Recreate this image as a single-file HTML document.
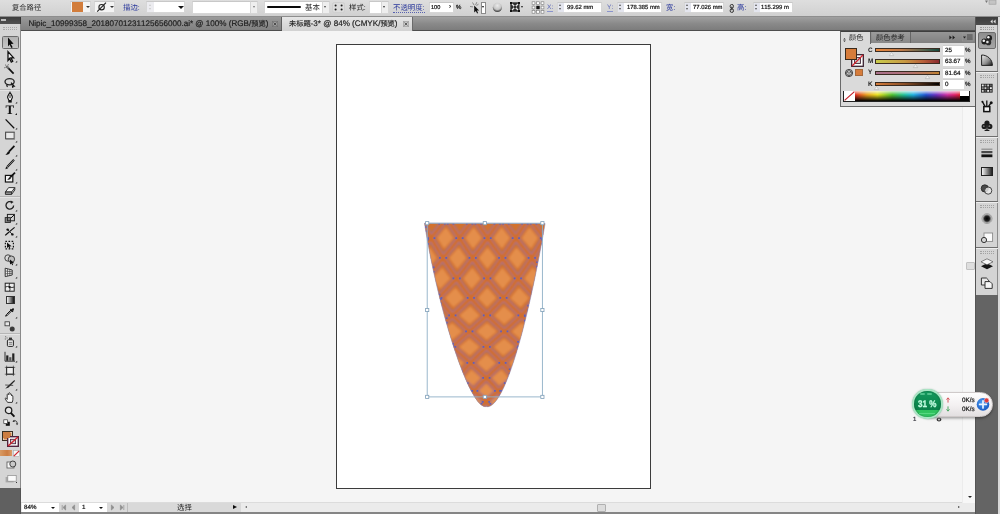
<!DOCTYPE html>
<html lang="zh-CN">
<head>
<meta charset="utf-8">
<title>Adobe Illustrator</title>
<style>
*{box-sizing:border-box;margin:0;padding:0}
html,body{width:1000px;height:514px;overflow:hidden;background:#f5f5f5;font-family:"Liberation Sans","Noto Sans CJK SC",sans-serif;text-rendering:geometricPrecision;font-kerning:none}
body{position:relative}
.a{position:absolute}
svg{display:block;overflow:visible}
.cj{font-family:"Liberation Sans","Noto Sans CJK SC",sans-serif;white-space:nowrap}
.t{position:absolute;white-space:nowrap;font-size:7px;line-height:8px;color:#222}
#ctl{left:0;top:0;width:1000px;height:17px;background:linear-gradient(#dedede,#d6d6d6 60%,#d0d0d0);border-bottom:1px solid #8e8e8e}
.in{position:absolute;background:#fff;border:1px solid #d6d6d6;border-top-color:#c8c8c8}
.v{position:absolute;white-space:nowrap;font-size:5.9px;line-height:6px;color:#161616;-webkit-text-stroke:.22px #161616}
#tabs{left:21px;top:17px;width:954px;height:14px;background:linear-gradient(#a0a0a0,#8a8a8a 50%,#7c7c7c);border-bottom:1px solid #4e4e4e}
.v,.tab,.t,.b{will-change:transform}
.tab{position:absolute;top:0;height:13px;-webkit-text-stroke:.18px #1e1e1e;font-size:8.1px;line-height:13px;white-space:nowrap;color:#1e1e1e}
#canvas{left:21px;top:31px;width:954px;height:472px;background:#f5f5f5}
#art{left:336px;top:44px;width:315px;height:445px;background:#fff;border:1px solid #3c3c3c}
#tools{left:0;top:17px;width:21px;height:471px;background:#d5d5d5;border-right:1px solid #8a8a8a}
#toolsb{left:0;top:488px;width:21px;height:26px;background:#606060;border-right:1.5px solid #525252}
#dock{left:975px;top:17px;width:23px;height:278px;background:#d4d4d4;border-left:1px solid #555;border-right:1px solid #8c8c8c}
#dockb{left:975px;top:295px;width:23px;height:219px;background:#646464;border-left:1px solid #555}
#redge{left:998px;top:17px;width:2px;height:497px;background:#d8d8d8}
#status{left:21px;top:502px;width:954px;height:10px;background:#ebebeb;border-top:1px solid #dcdcdc}
#bline{left:0;top:512px;width:1000px;height:2px;background:#858585}
</style>
</head>
<body>
<div class="a" id="canvas"></div>
<div class="a" id="art"></div>
<div class="a" id="ctl">
<div class="t" style="left:12.3px;top:4.4px"><span class="cj" style="font-size:7.3px;color:#2a2a2a">复合路径</span></div>
<div class="in" style="left:70px;top:1px;width:21px;height:12px;background:#f4f4f4"></div><div class="a" style="left:72px;top:2px;width:11px;height:10px;background:#d27d3c"></div><div class="a tri" style="left:86px;top:6px;border:2px solid transparent;border-top:2.4px solid #333;border-bottom:0"></div><div class="in" style="left:94px;top:1px;width:21px;height:12px;background:#f4f4f4"></div><svg class="a" style="left:96px;top:1px" width="12" height="12" viewBox="0 0 12 12"><circle cx="5.6" cy="6.2" r="2.700" fill="none" stroke="#222" stroke-width="1.100"/><path d="M1.2 10.6 L10 1.6" stroke="#222" stroke-width="1.100"/></svg><div class="a" style="left:110px;top:6px;border:2px solid transparent;border-top:2.4px solid #333;border-bottom:0"></div><div class="t" style="left:122.5px;top:4.1px"><span class="cj" style="font-size:7.4px;color:#2b399c">描边</span><span style="font-size:7px;color:#2b399c">:</span></div>
<div class="in" style="left:146px;top:1px;width:39px;height:12px"></div><div class="a" style="left:146.5px;top:2px;width:7px;height:10px;background:#ececf0"></div><div class="a" style="left:148.5px;top:3.6px;border:1.6px solid transparent;border-bottom:2px solid #c9c9c9;border-top:0"></div><div class="a" style="left:148.5px;top:8.2px;border:1.6px solid transparent;border-top:2px solid #c9c9c9;border-bottom:0"></div><div class="a" style="left:177.5px;top:6.4px;border:3px solid transparent;border-top:3.4px solid #111;border-bottom:0"></div><div class="in" style="left:192px;top:1px;width:59px;height:13px"></div><div class="in" style="left:251px;top:1px;width:7px;height:13px;background:#eee;border-left:0"></div><div class="a" style="left:252.6px;top:6.3px;border:1.7px solid transparent;border-top:2px solid #777;border-bottom:0"></div><div class="in" style="left:264px;top:1px;width:59px;height:13px"></div><div class="a" style="left:267px;top:6.2px;width:34px;height:1.7px;background:#0a0a0a;border-radius:1px"></div><div class="t" style="left:305px;top:4.3px"><span class="cj" style="font-size:7.4px;color:#222">基本</span></div><div class="in" style="left:323px;top:1px;width:7px;height:13px;background:#eee;border-left:0"></div><div class="a" style="left:324.4px;top:6px;border:1.8px solid transparent;border-top:2.2px solid #444;border-bottom:0"></div><svg class="a" style="left:332px;top:2px" width="13" height="11" viewBox="0 0 13 11"><rect x=".5" y=".5" width="12" height="10" rx="2" fill="#dcdcdc" stroke="#cfcfcf"/><g fill="#1c1c1c"><circle cx="3.6" cy="3.4" r="1"/><circle cx="9.6" cy="3.4" r="1"/><circle cx="3.6" cy="7.6" r="1"/><circle cx="9.6" cy="7.6" r="1"/></g></svg><div class="t" style="left:349.3px;top:4.4px"><span class="cj" style="font-size:7.4px;color:#222">样式</span><span style="font-size:7px">:</span></div><div class="in" style="left:368.5px;top:1px;width:13px;height:13px"></div><div class="in" style="left:381.5px;top:1px;width:7px;height:13px;background:#eee;border-left:0"></div><div class="a" style="left:383.3px;top:6px;border:1.8px solid transparent;border-top:2.2px solid #333;border-bottom:0"></div><div class="t" style="left:393px;top:4.3px;height:8.6px;border-bottom:1px dotted #5862b0"><span class="cj" style="font-size:7.4px;color:#2b399c">不透明度</span><span style="font-size:7px;color:#2b399c">:</span></div><div class="in" style="left:428.5px;top:1.5px;width:25px;height:11.5px"></div><div class="v" style="left:431.2px;top:4.8px;font-size:5.6px">100</div><div class="v" style="left:448.6px;top:4.2px;font-size:6.5px">&#8250;</div><div class="v" style="left:456px;top:4.8px;font-size:6px">%</div><svg class="a" style="left:468px;top:1px" width="13" height="13" viewBox="0 0 13 13"><path d="M6.2 4.6l0 7 1.7-1.6 1.2 2.4 1-.5-1.2-2.3 2.2-.2z" fill="#111"/><path d="M4.5 1.5l1.6 2.6M8.8 1.2L7.6 4M2 5.5l3 .4M10.5 3.2L8.4 4.6" stroke="#666" stroke-width=".7"/></svg><div class="in" style="left:480.5px;top:1.5px;width:5.5px;height:12px;border-color:#8a8a8a"></div><div class="a" style="left:481.8px;top:6px;border:1.5px solid transparent;border-top:2px solid #111;border-bottom:0"></div><svg class="a" style="left:492px;top:2px" width="11" height="11" viewBox="0 0 11 11"><defs><radialGradient id="gl" cx=".5" cy=".3" r=".72"><stop offset="0" stop-color="#eaeaea"/><stop offset=".6" stop-color="#c4c4c4"/><stop offset=".82" stop-color="#6a6a6a"/><stop offset="1" stop-color="#2a2a2a"/></radialGradient></defs><circle cx="5.4" cy="5.4" r="4.6" fill="url(#gl)"/></svg><svg class="a" style="left:510px;top:2px" width="10" height="10" viewBox="0 0 10 10"><rect x=".3" y=".3" width="9.2" height="9.4" fill="#2e2e2e"/><path d="M2 2l6 6M8 2L2 8" stroke="#e8e8e8" stroke-width="1.3"/><rect x="4" y="4" width="2" height="2" fill="#2e2e2e"/><g fill="#111"><rect x="0" y="0" width="2" height="2"/><rect x="8" y="0" width="2" height="2"/><rect x="0" y="8" width="2" height="2"/><rect x="8" y="8" width="2" height="2"/></g></svg><div class="a" style="left:520.6px;top:6px;border:1.7px solid transparent;border-top:2.2px solid #222;border-bottom:0"></div><svg class="a" style="left:532px;top:2px" width="12" height="11" viewBox="0 0 12 11"><rect x="1.5" y="1.2" width="9" height="8.6" fill="none" stroke="#9a9a9a" stroke-width=".8" stroke-dasharray="1 1"/><rect x="0.1" y="-0.2" width="2.8" height="2.8" fill="#fff" stroke="#777" stroke-width=".6"/><rect x="4.6" y="-0.2" width="2.8" height="2.8" fill="#fff" stroke="#777" stroke-width=".6"/><rect x="9.1" y="-0.2" width="2.8" height="2.8" fill="#fff" stroke="#777" stroke-width=".6"/><rect x="0.1" y="4.1" width="2.8" height="2.8" fill="#fff" stroke="#777" stroke-width=".6"/><rect x="4.3" y="3.8" width="3.4" height="3.4" fill="#111"/><rect x="9.1" y="4.1" width="2.8" height="2.8" fill="#fff" stroke="#777" stroke-width=".6"/><rect x="0.1" y="8.4" width="2.8" height="2.8" fill="#fff" stroke="#777" stroke-width=".6"/><rect x="4.6" y="8.4" width="2.8" height="2.8" fill="#fff" stroke="#777" stroke-width=".6"/><rect x="9.1" y="8.4" width="2.8" height="2.8" fill="#fff" stroke="#777" stroke-width=".6"/></svg><div class="t" style="left:547px;top:3.6px"><span style="font-size:6.6px;color:#5c68b8;border-bottom:.8px solid #8a94cc;line-height:7px;display:inline-block">X:</span></div><div class="in" style="left:557px;top:1.5px;width:45px;height:11.5px"></div><div class="a" style="left:557.5px;top:2.5px;width:6.5px;height:9.5px;background:#e3e5ee"></div><div class="a" style="left:559.2px;top:3.6px;border:1.6px solid transparent;border-bottom:2px solid #555;border-top:0"></div><div class="a" style="left:559.2px;top:8px;border:1.6px solid transparent;border-top:2px solid #555;border-bottom:0"></div><div class="v" style="left:567px;top:4.8px">99.62 mm</div>
<div class="t" style="left:607.3px;top:3.6px"><span style="font-size:6.6px;color:#5c68b8;border-bottom:.8px solid #8a94cc;line-height:7px;display:inline-block">Y:</span></div><div class="in" style="left:617px;top:1.5px;width:45px;height:11.5px"></div><div class="a" style="left:617.5px;top:2.5px;width:6.5px;height:9.5px;background:#e3e5ee"></div><div class="a" style="left:619.2px;top:3.6px;border:1.6px solid transparent;border-bottom:2px solid #555;border-top:0"></div><div class="a" style="left:619.2px;top:8px;border:1.6px solid transparent;border-top:2px solid #555;border-bottom:0"></div><div class="v" style="left:627px;top:4.8px">178.385 mm</div>
<div class="t" style="left:666px;top:4.2px"><span class="cj" style="font-size:7.4px;color:#2b399c">宽</span><span style="font-size:7px;color:#2b399c">:</span></div><div class="in" style="left:684px;top:1.5px;width:39.5px;height:11.5px"></div><div class="a" style="left:684.5px;top:2.5px;width:6.5px;height:9.5px;background:#e3e5ee"></div><div class="a" style="left:686.2px;top:3.6px;border:1.6px solid transparent;border-bottom:2px solid #555;border-top:0"></div><div class="a" style="left:686.2px;top:8px;border:1.6px solid transparent;border-top:2px solid #555;border-bottom:0"></div><div class="v" style="left:693px;top:4.8px">77.026 mm</div>
<svg class="a" style="left:728.5px;top:3.5px" width="6" height="9" viewBox="0 0 6 9"><rect x="1.2" y=".5" width="3.2" height="3.6" rx="1.4" fill="none" stroke="#333" stroke-width="1"/><rect x="1.2" y="4.8" width="3.2" height="3.6" rx="1.4" fill="none" stroke="#333" stroke-width="1"/><path d="M2.8 2.6v3.6" stroke="#333" stroke-width="1"/></svg><div class="t" style="left:736.6px;top:4.2px"><span class="cj" style="font-size:7.4px;color:#2b399c">高</span><span style="font-size:7px;color:#2b399c">:</span></div><div class="in" style="left:753px;top:1.5px;width:39.5px;height:11.5px"></div><div class="a" style="left:753.5px;top:2.5px;width:6.5px;height:9.5px;background:#e3e5ee"></div><div class="a" style="left:755.2px;top:3.6px;border:1.6px solid transparent;border-bottom:2px solid #555;border-top:0"></div><div class="a" style="left:755.2px;top:8px;border:1.6px solid transparent;border-top:2px solid #555;border-bottom:0"></div><div class="v" style="left:761.3px;top:4.8px">115.299 m</div>
<svg class="a" style="left:984px;top:0" width="14" height="6" viewBox="0 0 14 6"><rect x="5" y="0" width="7" height="4.2" fill="#c4c4c4" stroke="#9a9a9a" stroke-width=".6"/><path d="M1 .5h3l-1.5 2.4z" fill="#777"/></svg></div>
<div class="a" id="tabs">
<div class="tab" style="left:0;width:261px;background:linear-gradient(#9a9a9a,#8c8c8c 50%,#808080);border-right:1px solid #5e5e5e;padding-left:7.4px">Nipic_10999358_20180701231125656000.ai* @ 100% (RGB/<span class="cj" style="font-size:7.2px">预览</span>)</div><svg class="a" style="left:250.5px;top:3.5px" width="6" height="6" viewBox="0 0 6 6"><rect x=".3" y=".3" width="5.4" height="5.4" fill="#9c9c9c" stroke="#6f6f6f" stroke-width=".6"/><path d="M1.6 1.6l2.8 2.8M4.4 1.6L1.6 4.4" stroke="#3a3a3a" stroke-width=".8"/></svg><div class="tab" style="left:261px;width:131px;height:14px;background:linear-gradient(#e6e6e6,#dadada 50%,#d2d2d2);border-right:1px solid #6a6a6a;padding-left:7px"><span class="cj" style="font-size:7.2px">未标题</span>-3* @ 84% (CMYK/<span class="cj" style="font-size:7.2px">预览</span>)</div><svg class="a" style="left:382px;top:3.5px" width="6" height="6" viewBox="0 0 6 6"><rect x=".3" y=".3" width="5.4" height="5.4" fill="#c8c8c8" stroke="#9a9a9a" stroke-width=".6"/><path d="M1.6 1.6l2.8 2.8M4.4 1.6L1.6 4.4" stroke="#444" stroke-width=".8"/></svg></div>
<div class="a" id="status"></div>
<div class="a" style="left:22px;top:503px;width:37px;height:9px;background:#fff"></div><div class="v" style="left:24px;top:505px;font-size:6.2px">84%</div><div class="a" style="left:51px;top:507px;border:2.3px solid transparent;border-top:2.6px solid #111;border-bottom:0"></div><div class="a" style="left:59px;top:503px;width:182px;height:9px;background:#d9d9d9"></div><svg class="a" style="left:61px;top:504px" width="16" height="7" viewBox="0 0 16 7"><path d="M1.2 1v5M4.6 1v5l-2.6-2.5zM13.6 1v5l-2.6-2.5z" fill="#8e8e8e" stroke="#8e8e8e" stroke-width=".7"/></svg><div class="a" style="left:79px;top:503px;width:28px;height:9px;background:#fff"></div><div class="v" style="left:82px;top:505px;font-size:6.2px">1</div><div class="a" style="left:99.4px;top:507px;border:2.3px solid transparent;border-top:2.6px solid #111;border-bottom:0"></div><svg class="a" style="left:109px;top:504px" width="16" height="7" viewBox="0 0 16 7"><path d="M2.4 1v5l2.6-2.5zM11.4 1v5l2.6-2.5zM14.8 1v5" fill="#8e8e8e" stroke="#8e8e8e" stroke-width=".7"/></svg><div class="a" style="left:127px;top:503px;width:1px;height:9px;background:#bdbdbd"></div><div class="t" style="left:177.4px;top:503.6px"><span class="cj" style="font-size:7.4px;color:#1a1a1a">选择</span></div><div class="a" style="left:233.4px;top:505px;border:2.8px solid transparent;border-left:4.4px solid #0c0c0c;border-right:0"></div><div class="a" style="left:245px;top:506px;border:1.6px solid transparent;border-right:2px solid #555;border-left:0"></div><div class="a" style="left:597px;top:504px;width:9px;height:8px;background:#dcdcdc;border:1px solid #b0b0b0;border-radius:1px"></div><div class="a" style="left:958px;top:506px;border:1.6px solid transparent;border-left:2px solid #444;border-right:0"></div><div class="a" id="bline"></div>
<div class="a" id="tools"></div><div class="a" id="toolsb"></div>
<div class="a" id="dock"></div><div class="a" id="dockb"></div><div class="a" id="redge"></div>
<svg class="a" style="left:0;top:0" width="1000" height="514" viewBox="0 0 1000 514"><title>cone artwork</title><defs><clipPath id="cc"><path d="M424.5 223.2L545.1 223.5C526.2 333.7 502.9 410.2 486.4 406.6C469.9 410.2 437.9 309.7 424.5 223.2Z"/></clipPath><filter id="sb" x="-5%" y="-5%" width="110%" height="110%"><feGaussianBlur stdDeviation=".95"/></filter></defs><path d="M424.5 223.2L545.1 223.5C526.2 333.7 502.9 410.2 486.4 406.6C469.9 410.2 437.9 309.7 424.5 223.2Z" fill="#d2722f"/><g clip-path="url(#cc)"><g filter="url(#sb)"><path d="M418.1 229.2L423.7 238L415.5 246.8L410.5 238ZM445.9 229.2L451.9 238L444.3 246.8L438.7 238ZM473.7 229.2L480.1 238L473.1 246.8L466.9 238ZM501.6 229.2L508.3 238L501.9 246.8L495.1 238ZM529.4 229.2L536.5 238L530.8 246.8L523.3 238ZM429.5 249.2L435.2 258L427.3 267L421.3 258ZM458.5 249.2L464.8 258L457.3 267L450.9 258ZM487.5 249.2L494.4 258L487.4 267L480.5 258ZM516.5 249.2L524 258L517.4 267L510.1 258ZM545.5 249.2L553.6 258L547.4 267L539.7 258ZM442.1 269.5L448.6 278.5L440 287.1L434.2 278.5ZM472.3 269.5L479.2 278.5L471.5 287.1L464.8 278.5ZM502.4 269.5L509.8 278.5L502.9 287.1L495.4 278.5ZM532.6 269.5L540.4 278.5L534.4 287.1L526 278.5ZM423.8 289.4L429.6 298L420.1 305.7L414.3 298ZM455.5 289.4L462.2 298L453.6 305.7L446.9 298ZM487.2 289.4L494.8 298L487 305.7L479.5 298ZM518.9 289.4L527.4 298L520.5 305.7L512.1 298ZM550.6 289.4L560 298L554 305.7L544.7 298ZM436.5 307.8L443.2 315.5L434.7 322.5L426.9 315.5ZM470.2 307.8L477.8 315.5L469.5 322.5L461.5 315.5ZM503.9 307.8L512.4 315.5L504.3 322.5L496.1 315.5ZM537.6 307.8L547 315.5L539.1 322.5L530.7 315.5ZM417.2 324.5L425 331.5L417.1 338.3L408.6 331.5ZM452 324.5L460 331.5L451.9 338.3L443.6 331.5ZM486.9 324.5L495 331.5L486.7 338.3L478.6 331.5ZM521.7 324.5L530 331.5L521.6 338.3L513.6 331.5ZM434.5 340.2L442.9 347L436.4 354L426.6 347ZM469.3 340.2L477.5 347L469.8 354L461.2 347ZM504.1 340.2L512.1 347L503.3 354L495.8 347ZM538.9 340.2L546.7 347L536.8 354L530.4 347ZM420.3 356L430 363L425.9 369.6L415 363ZM453.4 356L462 363L456.2 369.6L447 363ZM486.6 356L494 363L486.4 369.6L479 363ZM519.7 356L526 363L516.6 369.6L511 363ZM552.8 356L558 363L546.9 369.6L543 363ZM412 371.4L422.9 378L420.6 383.7L409.7 378ZM441.8 371.4L450.9 378L446.9 383.7L437.7 378ZM471.5 371.4L478.9 378L473.1 383.7L465.7 378ZM501.3 371.4L506.9 378L499.4 383.7L493.7 378ZM531 371.4L534.9 378L525.6 383.7L521.7 378ZM434.7 385.3L443.8 391L440.7 395.8L432.5 391ZM460.5 385.3L467.8 391L463.4 395.8L456.5 391ZM486.2 385.3L491.8 391L486.1 395.8L480.5 391ZM512 385.3L515.8 391L508.8 395.8L504.5 391ZM537.8 385.3L539.8 391L531.4 395.8L528.5 391ZM430.3 397.2L438.4 402L435.6 406L428.6 402ZM452.6 397.2L459.4 402L455.7 406L449.6 402ZM474.9 397.2L480.4 402L475.9 406L470.6 402ZM497.2 397.2L501.4 402L496 406L491.6 402ZM519.6 397.2L522.4 402L516.1 406L512.6 402ZM541.9 397.2L543.4 402L536.2 406L533.6 402ZM426.3 407L433.3 411L430.1 414.5L424.4 411ZM446.2 407L452.3 411L448.6 414.5L443.4 411ZM466 407L471.3 411L467.2 414.5L462.4 411ZM485.9 407L490.3 411L485.8 414.5L481.4 411ZM505.8 407L509.3 411L504.3 414.5L500.4 411ZM525.7 407L528.3 411L522.9 414.5L519.4 411ZM545.6 407L547.3 411L541.4 414.5L538.4 411Z" fill="#e48e4c" stroke="#e48e4c" stroke-width="2.400" stroke-linejoin="round"/><path d="M406.5 363L418.9 370.5L430.3 378L440.7 384.5L450.2 391L458 396.5L465 402L470.9 406.5L476.3 411M399.3 331.5L408.4 339.2L417.4 347L428.3 355L438.5 363L448.9 370.5L458.3 378L466.7 384.5L474.2 391L480.5 396.5L486 402L490.9 406.5L495.3 411M395.5 278.5L400.3 288.2L405.6 298L411.4 306.8L417.8 315.5L426 323.5L434.3 331.5L443.2 339.2L452 347L461.6 355L470.5 363L478.9 370.5L486.3 378L492.7 384.5L498.2 391L503 396.5L507 402L510.9 406.5L514.3 411M397.3 228L403 238L408 248L413.4 258L419.6 268.2L426.1 278.5L431.9 288.2L438.2 298L445 306.8L452.4 315.5L460.8 323.5L469.3 331.5L478 339.2L486.6 347L494.9 355L502.5 363L508.9 370.5L514.3 378L518.7 384.5L522.2 391L525.5 396.5L528 402L530.9 406.5L533.3 411M427.3 208L419.3 218L411.2 228L403 238M413.9 208L419.3 218L425.1 228L431.2 238L436.9 248L443 258L449.7 268.2L456.7 278.5L463.5 288.2L470.8 298L478.6 306.8L487 315.5L495.6 323.5L504.3 331.5L512.8 339.2L521.2 347L528.2 355L534.5 363L538.9 370.5L542.3 378L544.7 384.5L546.2 391L548 396.5L549 402L550.9 406.5L552.3 411M454.2 208L446.7 218L439 228L431.2 238L422.5 248L413.4 258L404.6 268.2L395.5 278.5M440.8 208L446.7 218L452.9 228L459.4 238L465.8 248L472.6 258L479.8 268.2L487.3 278.5L495.1 288.2L503.4 298L512.2 306.8L521.6 315.5L530.4 323.5L539.3 331.5L547.6 339.2L555.8 347L561.5 355L566.5 363L568.9 370.5L570.3 378L570.7 384.5L570.2 391L570.5 396.5L570 402L570.9 406.5L571.3 411M481.1 208L474.1 218L466.8 228L459.4 238L451.4 248L443 258L434.7 268.2L426.1 278.5L416.1 288.2L405.6 298M467.7 208L474.1 218L480.7 228L487.6 238L494.7 248L502.2 258L509.9 268.2L517.9 278.5L526.7 288.2L536 298L545.8 306.8L556.2 315.5L565.2 323.5L574.3 331.5M508 208L501.5 218L494.6 228L487.6 238L480.3 248L472.6 258L464.8 268.2L456.7 278.5L447.7 288.2L438.2 298L428.2 306.8L417.8 315.5L408.6 323.5L399.3 331.5M494.6 208L501.5 218L508.5 228L515.8 238L523.6 248L531.8 258L540 268.2L548.5 278.5L558.3 288.2L568.6 298M534.9 208L528.9 218L522.4 228L515.8 238L509.2 248L502.2 258L494.9 268.2L487.3 278.5L479.3 288.2L470.8 298L461.8 306.8L452.4 315.5L443.4 323.5L434.3 331.5L425.8 339.2L417.4 347L411.6 355L406.5 363L403.9 370.5L402.3 378L401.7 384.5L402.2 391L401.7 396.5L402 402L400.9 406.5L400.3 411M521.5 208L528.9 218L536.3 228L544 238L552.5 248L561.4 258L570.1 268.2M561.8 208L556.3 218L550.2 228L544 238L538.1 248L531.8 258L525 268.2L517.9 278.5L510.9 288.2L503.4 298L495.4 306.8L487 315.5L478.2 323.5L469.3 331.5L460.6 339.2L452 347L444.9 355L438.5 363L433.9 370.5L430.3 378L427.7 384.5L426.2 391L424.2 396.5L423 402L420.9 406.5L419.3 411M548.4 208L556.3 218L564.1 228L572.2 238M572.2 238L567 248L561.4 258L555.1 268.2L548.5 278.5L542.5 288.2L536 298L529 306.8L521.6 315.5L513 323.5L504.3 331.5L495.4 339.2L486.6 347L478.2 355L470.5 363L463.9 370.5L458.3 378L453.7 384.5L450.2 391L446.7 396.5L444 402L440.9 406.5L438.3 411M574.1 288.2L568.6 298L562.6 306.8L556.2 315.5L547.8 323.5L539.3 331.5L530.2 339.2L521.2 347L511.5 355L502.5 363L493.9 370.5L486.3 378L479.7 384.5L474.2 391L469.2 396.5L465 402L460.9 406.5L457.3 411M574.3 331.5L565 339.2L555.8 347L544.8 355L534.5 363L523.9 370.5L514.3 378L505.7 384.5L498.2 391L491.7 396.5L486 402L480.9 406.5L476.3 411M566.5 363L553.9 370.5L542.3 378L531.7 384.5L522.2 391L514.2 396.5L507 402L500.9 406.5L495.3 411" fill="none" stroke="#6672cc" stroke-opacity=".62" stroke-width="6.2" stroke-linejoin="round"/><path d="M406.5 363L418.9 370.5L430.3 378L440.7 384.5L450.2 391L458 396.5L465 402L470.9 406.5L476.3 411M399.3 331.5L408.4 339.2L417.4 347L428.3 355L438.5 363L448.9 370.5L458.3 378L466.7 384.5L474.2 391L480.5 396.5L486 402L490.9 406.5L495.3 411M395.5 278.5L400.3 288.2L405.6 298L411.4 306.8L417.8 315.5L426 323.5L434.3 331.5L443.2 339.2L452 347L461.6 355L470.5 363L478.9 370.5L486.3 378L492.7 384.5L498.2 391L503 396.5L507 402L510.9 406.5L514.3 411M397.3 228L403 238L408 248L413.4 258L419.6 268.2L426.1 278.5L431.9 288.2L438.2 298L445 306.8L452.4 315.5L460.8 323.5L469.3 331.5L478 339.2L486.6 347L494.9 355L502.5 363L508.9 370.5L514.3 378L518.7 384.5L522.2 391L525.5 396.5L528 402L530.9 406.5L533.3 411M427.3 208L419.3 218L411.2 228L403 238M413.9 208L419.3 218L425.1 228L431.2 238L436.9 248L443 258L449.7 268.2L456.7 278.5L463.5 288.2L470.8 298L478.6 306.8L487 315.5L495.6 323.5L504.3 331.5L512.8 339.2L521.2 347L528.2 355L534.5 363L538.9 370.5L542.3 378L544.7 384.5L546.2 391L548 396.5L549 402L550.9 406.5L552.3 411M454.2 208L446.7 218L439 228L431.2 238L422.5 248L413.4 258L404.6 268.2L395.5 278.5M440.8 208L446.7 218L452.9 228L459.4 238L465.8 248L472.6 258L479.8 268.2L487.3 278.5L495.1 288.2L503.4 298L512.2 306.8L521.6 315.5L530.4 323.5L539.3 331.5L547.6 339.2L555.8 347L561.5 355L566.5 363L568.9 370.5L570.3 378L570.7 384.5L570.2 391L570.5 396.5L570 402L570.9 406.5L571.3 411M481.1 208L474.1 218L466.8 228L459.4 238L451.4 248L443 258L434.7 268.2L426.1 278.5L416.1 288.2L405.6 298M467.7 208L474.1 218L480.7 228L487.6 238L494.7 248L502.2 258L509.9 268.2L517.9 278.5L526.7 288.2L536 298L545.8 306.8L556.2 315.5L565.2 323.5L574.3 331.5M508 208L501.5 218L494.6 228L487.6 238L480.3 248L472.6 258L464.8 268.2L456.7 278.5L447.7 288.2L438.2 298L428.2 306.8L417.8 315.5L408.6 323.5L399.3 331.5M494.6 208L501.5 218L508.5 228L515.8 238L523.6 248L531.8 258L540 268.2L548.5 278.5L558.3 288.2L568.6 298M534.9 208L528.9 218L522.4 228L515.8 238L509.2 248L502.2 258L494.9 268.2L487.3 278.5L479.3 288.2L470.8 298L461.8 306.8L452.4 315.5L443.4 323.5L434.3 331.5L425.8 339.2L417.4 347L411.6 355L406.5 363L403.9 370.5L402.3 378L401.7 384.5L402.2 391L401.7 396.5L402 402L400.9 406.5L400.3 411M521.5 208L528.9 218L536.3 228L544 238L552.5 248L561.4 258L570.1 268.2M561.8 208L556.3 218L550.2 228L544 238L538.1 248L531.8 258L525 268.2L517.9 278.5L510.9 288.2L503.4 298L495.4 306.8L487 315.5L478.2 323.5L469.3 331.5L460.6 339.2L452 347L444.9 355L438.5 363L433.9 370.5L430.3 378L427.7 384.5L426.2 391L424.2 396.5L423 402L420.9 406.5L419.3 411M548.4 208L556.3 218L564.1 228L572.2 238M572.2 238L567 248L561.4 258L555.1 268.2L548.5 278.5L542.5 288.2L536 298L529 306.8L521.6 315.5L513 323.5L504.3 331.5L495.4 339.2L486.6 347L478.2 355L470.5 363L463.9 370.5L458.3 378L453.7 384.5L450.2 391L446.7 396.5L444 402L440.9 406.5L438.3 411M574.1 288.2L568.6 298L562.6 306.8L556.2 315.5L547.8 323.5L539.3 331.5L530.2 339.2L521.2 347L511.5 355L502.5 363L493.9 370.5L486.3 378L479.7 384.5L474.2 391L469.2 396.5L465 402L460.9 406.5L457.3 411M574.3 331.5L565 339.2L555.8 347L544.8 355L534.5 363L523.9 370.5L514.3 378L505.7 384.5L498.2 391L491.7 396.5L486 402L480.9 406.5L476.3 411M566.5 363L553.9 370.5L542.3 378L531.7 384.5L522.2 391L514.2 396.5L507 402L500.9 406.5L495.3 411" fill="none" stroke="#d06e2e" stroke-width="4.2" stroke-linejoin="round"/></g><path d="M427.2 237.2h1.7v1.7h-1.7zM433.6 237.2h1.7v1.7h-1.7zM455.4 237.2h1.7v1.7h-1.7zM461.8 237.2h1.7v1.7h-1.7zM483.6 237.2h1.7v1.7h-1.7zM489.9 237.2h1.7v1.7h-1.7zM511.8 237.2h1.7v1.7h-1.7zM518.2 237.2h1.7v1.7h-1.7zM539.9 237.2h1.7v1.7h-1.7zM546.4 237.2h1.7v1.7h-1.7zM439 257.1h1.7v1.7h-1.7zM445.4 257.1h1.7v1.7h-1.7zM468.6 257.1h1.7v1.7h-1.7zM475 257.1h1.7v1.7h-1.7zM498.2 257.1h1.7v1.7h-1.7zM504.6 257.1h1.7v1.7h-1.7zM527.8 257.1h1.7v1.7h-1.7zM534.2 257.1h1.7v1.7h-1.7zM422 277.6h1.7v1.7h-1.7zM428.4 277.6h1.7v1.7h-1.7zM452.6 277.6h1.7v1.7h-1.7zM459 277.6h1.7v1.7h-1.7zM483.2 277.6h1.7v1.7h-1.7zM489.6 277.6h1.7v1.7h-1.7zM513.8 277.6h1.7v1.7h-1.7zM520.2 277.6h1.7v1.7h-1.7zM544.4 277.6h1.7v1.7h-1.7zM550.8 277.6h1.7v1.7h-1.7zM434.2 297.1h1.7v1.7h-1.7zM440.6 297.1h1.7v1.7h-1.7zM466.8 297.1h1.7v1.7h-1.7zM473.2 297.1h1.7v1.7h-1.7zM499.4 297.1h1.7v1.7h-1.7zM505.8 297.1h1.7v1.7h-1.7zM532 297.1h1.7v1.7h-1.7zM538.4 297.1h1.7v1.7h-1.7zM448.3 314.6h1.7v1.7h-1.7zM454.7 314.6h1.7v1.7h-1.7zM482.9 314.6h1.7v1.7h-1.7zM489.3 314.6h1.7v1.7h-1.7zM517.5 314.6h1.7v1.7h-1.7zM523.9 314.6h1.7v1.7h-1.7zM430.2 330.6h1.7v1.7h-1.7zM436.6 330.6h1.7v1.7h-1.7zM465.2 330.6h1.7v1.7h-1.7zM471.6 330.6h1.7v1.7h-1.7zM500.2 330.6h1.7v1.7h-1.7zM506.6 330.6h1.7v1.7h-1.7zM535.2 330.6h1.7v1.7h-1.7zM541.6 330.6h1.7v1.7h-1.7zM448 346.1h1.7v1.7h-1.7zM454.4 346.1h1.7v1.7h-1.7zM482.6 346.1h1.7v1.7h-1.7zM489 346.1h1.7v1.7h-1.7zM517.2 346.1h1.7v1.7h-1.7zM523.6 346.1h1.7v1.7h-1.7zM434.4 362.1h1.7v1.7h-1.7zM440.8 362.1h1.7v1.7h-1.7zM466.4 362.1h1.7v1.7h-1.7zM472.8 362.1h1.7v1.7h-1.7zM498.4 362.1h1.7v1.7h-1.7zM504.8 362.1h1.7v1.7h-1.7zM530.4 362.1h1.7v1.7h-1.7zM536.8 362.1h1.7v1.7h-1.7zM426.3 377.1h1.7v1.7h-1.7zM432.7 377.1h1.7v1.7h-1.7zM454.3 377.1h1.7v1.7h-1.7zM460.7 377.1h1.7v1.7h-1.7zM482.3 377.1h1.7v1.7h-1.7zM488.7 377.1h1.7v1.7h-1.7zM510.3 377.1h1.7v1.7h-1.7zM516.7 377.1h1.7v1.7h-1.7zM538.3 377.1h1.7v1.7h-1.7zM544.7 377.1h1.7v1.7h-1.7zM422.1 390.1h1.7v1.7h-1.7zM428.5 390.1h1.7v1.7h-1.7zM446.1 390.1h1.7v1.7h-1.7zM452.5 390.1h1.7v1.7h-1.7zM470.1 390.1h1.7v1.7h-1.7zM476.5 390.1h1.7v1.7h-1.7zM494.1 390.1h1.7v1.7h-1.7zM500.5 390.1h1.7v1.7h-1.7zM518.1 390.1h1.7v1.7h-1.7zM524.5 390.1h1.7v1.7h-1.7zM542.1 390.1h1.7v1.7h-1.7zM548.5 390.1h1.7v1.7h-1.7zM418.9 401.1h1.7v1.7h-1.7zM425.3 401.1h1.7v1.7h-1.7zM439.9 401.1h1.7v1.7h-1.7zM446.3 401.1h1.7v1.7h-1.7zM460.9 401.1h1.7v1.7h-1.7zM467.3 401.1h1.7v1.7h-1.7zM481.9 401.1h1.7v1.7h-1.7zM488.3 401.1h1.7v1.7h-1.7zM502.9 401.1h1.7v1.7h-1.7zM509.3 401.1h1.7v1.7h-1.7zM523.9 401.1h1.7v1.7h-1.7zM530.4 401.1h1.7v1.7h-1.7zM544.9 401.1h1.7v1.7h-1.7zM551.4 401.1h1.7v1.7h-1.7zM466.9 382.3h1.7v1.7h-1.7zM466.9 386.7h1.7v1.7h-1.7zM489.5 402.9h1.7v1.7h-1.7zM489.5 407.3h1.7v1.7h-1.7zM452.4 344.9h1.7v1.7h-1.7zM452.4 349.3h1.7v1.7h-1.7zM499.2 390h1.7v1.7h-1.7zM499.2 394.4h1.7v1.7h-1.7zM439.9 298.2h1.7v1.7h-1.7zM439.9 302.6h1.7v1.7h-1.7zM508.8 368.4h1.7v1.7h-1.7zM508.8 372.8h1.7v1.7h-1.7zM425 226.2h1.7v1.7h-1.7zM425 230.6h1.7v1.7h-1.7zM517.2 341h1.7v1.7h-1.7zM517.2 345.4h1.7v1.7h-1.7zM438.3 222.9h1.7v1.7h-1.7zM443.9 222.9h1.7v1.7h-1.7zM427.1 238.7h1.7v1.7h-1.7zM427.1 243.1h1.7v1.7h-1.7zM446.9 222.9h1.7v1.7h-1.7zM452.5 222.9h1.7v1.7h-1.7zM524 315.4h1.7v1.7h-1.7zM524 319.8h1.7v1.7h-1.7zM465.9 222.9h1.7v1.7h-1.7zM471.5 222.9h1.7v1.7h-1.7zM432.8 266.5h1.7v1.7h-1.7zM432.8 270.9h1.7v1.7h-1.7zM474.6 222.9h1.7v1.7h-1.7zM480.2 222.9h1.7v1.7h-1.7zM531.6 291.3h1.7v1.7h-1.7zM531.6 295.7h1.7v1.7h-1.7zM493.6 222.9h1.7v1.7h-1.7zM499.2 222.9h1.7v1.7h-1.7zM438.6 293.7h1.7v1.7h-1.7zM438.6 298.1h1.7v1.7h-1.7zM502.2 222.9h1.7v1.7h-1.7zM507.8 222.9h1.7v1.7h-1.7zM536.1 261.4h1.7v1.7h-1.7zM536.1 265.8h1.7v1.7h-1.7zM521.2 222.9h1.7v1.7h-1.7zM526.8 222.9h1.7v1.7h-1.7zM445.9 317.4h1.7v1.7h-1.7zM445.9 321.8h1.7v1.7h-1.7zM529.9 222.9h1.7v1.7h-1.7zM535.5 222.9h1.7v1.7h-1.7zM542.2 233.7h1.7v1.7h-1.7zM542.2 238.1h1.7v1.7h-1.7zM541 238.7h1.7v1.7h-1.7zM541 243.1h1.7v1.7h-1.7zM452.3 343h1.7v1.7h-1.7zM452.3 347.4h1.7v1.7h-1.7zM527.3 304.8h1.7v1.7h-1.7zM527.3 309.2h1.7v1.7h-1.7zM460.8 370.3h1.7v1.7h-1.7zM460.8 374.7h1.7v1.7h-1.7zM516.7 346.9h1.7v1.7h-1.7zM516.7 351.3h1.7v1.7h-1.7zM471.4 390h1.7v1.7h-1.7zM471.4 394.4h1.7v1.7h-1.7zM503.9 382.3h1.7v1.7h-1.7zM503.9 386.7h1.7v1.7h-1.7zM480.7 402.9h1.7v1.7h-1.7zM480.7 407.3h1.7v1.7h-1.7z" fill="#4a5cd0" fill-opacity=".85"/></g><path d="M424.5 223.2L545.1 223.5C526.2 333.7 502.9 410.2 486.4 406.6C469.9 410.2 437.9 309.7 424.5 223.2Z" fill="none" stroke="#8a86b8" stroke-opacity=".55" stroke-width="1"/><rect x="427.2" y="223.2" width="115.19999999999999" height="173.7" fill="none" stroke="#8fb0c6" stroke-width=".9"/><rect x="425.6" y="221.6" width="3.2" height="3.2" fill="#fff" stroke="#7f9fb8" stroke-width=".8"/><rect x="425.6" y="308.4" width="3.2" height="3.2" fill="#fff" stroke="#7f9fb8" stroke-width=".8"/><rect x="425.6" y="395.3" width="3.2" height="3.2" fill="#fff" stroke="#7f9fb8" stroke-width=".8"/><rect x="483.2" y="221.6" width="3.2" height="3.2" fill="#fff" stroke="#7f9fb8" stroke-width=".8"/><rect x="483.2" y="395.3" width="3.2" height="3.2" fill="#fff" stroke="#7f9fb8" stroke-width=".8"/><rect x="540.8" y="221.6" width="3.2" height="3.2" fill="#fff" stroke="#7f9fb8" stroke-width=".8"/><rect x="540.8" y="308.4" width="3.2" height="3.2" fill="#fff" stroke="#7f9fb8" stroke-width=".8"/><rect x="540.8" y="395.3" width="3.2" height="3.2" fill="#fff" stroke="#7f9fb8" stroke-width=".8"/></svg>
<div class="a" style="left:0;top:17px;width:21px;height:7px;background:linear-gradient(#3e3e3e,#505050);border-right:1px solid #333"></div><div class="a" style="left:1px;top:19px;width:5px;height:2px;background:#bdbdbd"></div><div class="a" style="left:3px;top:27px;width:14px;height:3px;border-top:1px dotted #a8a8a8;border-bottom:1px dotted #a8a8a8"></div><div class="a" style="left:2px;top:35.5px;width:16.5px;height:13.5px;background:linear-gradient(#b2b2b2,#c6c6c6);border:1px solid #6a6a6a;border-radius:1.5px"></div><svg class="a" style="left:4px;top:37px" width="13" height="12" viewBox="0 0 13 12"><path d="M4 .6l5.6 6.2-2.7.1 1.8 3.4-1.4.7-1.7-3.5L4 9.4z" fill="#0c0c0c"/></svg>
<svg class="a" style="left:4px;top:50.5px" width="13" height="12" viewBox="0 0 13 12"><path d="M4 .6l5.6 6.2-2.7.1 1.8 3.4-1.4.7-1.7-3.5L4 9.4z" fill="#f4f4f4" stroke="#111" stroke-width="1.3"/><path d="M11.4 11.6h1.8v-1.8z" fill="#222"/></svg>
<svg class="a" style="left:4px;top:63.5px" width="13" height="12" viewBox="0 0 13 12"><path d="M2.4 2.2l7.2 7.4" stroke="#111" stroke-width="1.7"/><path d="M2.4 2.2l2.2 2.2" stroke="#777" stroke-width="2.2"/><path d="M1 .6l1 .9M4.4 .2l-.4 1.2M.2 3.8l1.3-.3" stroke="#444" stroke-width=".7"/></svg>
<svg class="a" style="left:4px;top:77.5px" width="13" height="12" viewBox="0 0 13 12"><ellipse cx="5.6" cy="3.8" rx="4.6" ry="3.1" fill="none" stroke="#222" stroke-width="1.3"/><path d="M3.4 6.4c-1 .8-.6 2 .3 2.2M7 4.6l3.2 3.6-1.7 0 .4 1.6" fill="none" stroke="#111" stroke-width="1.2"/></svg>
<div class="a" style="left:0;top:88.5px;width:20px;height:1px;background:#b6b6b6;border-bottom:1px solid #e4e4e4;height:2px"></div><svg class="a" style="left:4px;top:91.5px" width="13" height="12" viewBox="0 0 13 12"><path d="M6 .4c.6 1.4 2.4 3 2.4 5L7 8.6H5L3.6 5.4c0-2 1.8-3.600 2.400-5z" fill="#f0f0f0" stroke="#111" stroke-width="1.1"/><path d="M6 3v3" stroke="#111" stroke-width=".9"/><rect x="4.300" y="8.800" width="3.400" height="1.800" fill="#111"/><path d="M11.4 11.6h1.8v-1.8z" fill="#222"/></svg>
<div class="a" style="left:5.6px;top:102.6px;font-family:'Liberation Serif',serif;font-weight:bold;font-size:13px;line-height:13px;color:#111">T</div><svg class="a" style="left:15.2px;top:113px" width="2" height="2" viewBox="0 0 2 2"><path d="M0 2h2V0z" fill="#222"/></svg><svg class="a" style="left:4px;top:117.5px" width="13" height="12" viewBox="0 0 13 12"><path d="M1.6 1.4l8.6 8.800" stroke="#111" stroke-width="1.3"/><path d="M11.4 11.6h1.8v-1.8z" fill="#222"/></svg>
<svg class="a" style="left:4px;top:131px" width="13" height="12" viewBox="0 0 13 12"><rect x="1.6" y="1.2" width="8.600" height="6.600" fill="#e9e9e9" stroke="#4a4a4a" stroke-width="1.1"/><path d="M2 8.4h8.6V2" fill="none" stroke="#8a8a8a" stroke-width=".8"/><path d="M11.4 11.6h1.8v-1.8z" fill="#222"/></svg>
<svg class="a" style="left:4px;top:144.5px" width="13" height="12" viewBox="0 0 13 12"><path d="M10.4 .8L5 6.600" stroke="#111" stroke-width="1.7"/><path d="M4.800 6.200c-1.700.3-1.400 2.400-3.400 3.200 2 .8 4.400-.3 4.600-2.200z" fill="#111"/><path d="M11.4 11.6h1.8v-1.8z" fill="#222"/></svg>
<svg class="a" style="left:4px;top:158.5px" width="13" height="12" viewBox="0 0 13 12"><path d="M10 .8L3.200 8" stroke="#111" stroke-width="2"/><path d="M10 .8L3.200 8" stroke="#d0d0d0" stroke-width=".6"/><path d="M1.400 10.200l.8-2.800 2 1.800z" fill="#111"/><path d="M11.4 11.6h1.8v-1.8z" fill="#222"/></svg>
<svg class="a" style="left:4px;top:171.5px" width="13" height="12" viewBox="0 0 13 12"><rect x="1.4" y="3.400" width="7.400" height="6.600" fill="#f2f2f2" stroke="#111" stroke-width="1.200"/><path d="M11 .6L6.200 5.400" stroke="#111" stroke-width="1.700"/><path d="M6 5c-1.500.3-1.200 2-2.800 2.600 1.700.6 3.600-.2 3.800-1.800z" fill="#111"/><path d="M11.4 11.6h1.8v-1.8z" fill="#222"/></svg>
<svg class="a" style="left:4px;top:185.5px" width="13" height="12" viewBox="0 0 13 12"><path d="M4.600 1.600h6.200L7.600 6H1.400z" fill="#f4f4f4" stroke="#222" stroke-width=".900"/><path d="M1.400 6h6.200v2.400H1.400z" fill="#9a9a9a" stroke="#222" stroke-width=".9"/><path d="M7.600 8.400L10.800 4V1.600" fill="none" stroke="#222" stroke-width=".900"/><path d="M11.4 11.6h1.8v-1.8z" fill="#222"/></svg>
<div class="a" style="left:0;top:196px;width:20px;height:2px;background:#b6b6b6;border-bottom:1px solid #e4e4e4"></div><svg class="a" style="left:4px;top:199.5px" width="13" height="12" viewBox="0 0 13 12"><path d="M9.600 5.400a3.800 3.800 0 1 1-1.600-3.100" fill="none" stroke="#222" stroke-width="1.300"/><path d="M6.600.4l3 1.600-2.600 1.800z" fill="#222"/><path d="M11.4 11.6h1.8v-1.8z" fill="#222"/></svg>
<svg class="a" style="left:4px;top:212.5px" width="13" height="12" viewBox="0 0 13 12"><rect x="1.200" y="4.600" width="5.200" height="4.800" fill="#8c8c8c" stroke="#222" stroke-width=".9"/><rect x="3.400" y="1.400" width="7" height="6.400" fill="none" stroke="#222" stroke-width="1"/><path d="M7 5l3-3" stroke="#111" stroke-width="1"/><path d="M11.4 11.6h1.8v-1.8z" fill="#222"/></svg>
<svg class="a" style="left:4px;top:225.5px" width="13" height="12" viewBox="0 0 13 12"><path d="M1.200 9.400C4 7 6.600 4.600 10.600 1.400" stroke="#111" stroke-width="1.200" fill="none"/><path d="M3.600 3.600l4.800 4.800" stroke="#333" stroke-width="1"/><circle cx="3.600" cy="3.600" r="1.200" fill="#111"/><circle cx="8.400" cy="8.400" r="1.200" fill="#111"/><path d="M11.4 11.6h1.8v-1.8z" fill="#222"/></svg>
<svg class="a" style="left:4px;top:239.5px" width="13" height="12" viewBox="0 0 13 12"><rect x="1.400" y="1.400" width="8" height="7.400" fill="none" stroke="#111" stroke-width="1.200" stroke-dasharray="1.600 1.500"/><path d="M3 2.600l4.600 3.600-2 .2.800 2-1 .4-.9-2-1.500 1.300z" fill="#111"/></svg>
<svg class="a" style="left:4px;top:253.5px" width="13" height="12" viewBox="0 0 13 12"><circle cx="4" cy="4" r="3.200" fill="#d9d9d9" stroke="#333" stroke-width=".9"/><circle cx="7.400" cy="5.200" r="3.200" fill="#bdbdbd" stroke="#333" stroke-width=".9"/><path d="M6 5.600l4.400 3.600-2-.1.700 1.800-.9.300-.7-1.700-1.500 1z" fill="#111"/><path d="M11.4 11.6h1.8v-1.8z" fill="#222"/></svg>
<svg class="a" style="left:4px;top:266.5px" width="13" height="12" viewBox="0 0 13 12"><path d="M1.200 1.200v8.400l7-1.600V3z" fill="#ececec" stroke="#222" stroke-width=".9"/><path d="M3.500 1.800v7.300M5.800 2.300v6.300M1.200 4l7 .8M1.200 6.800l7-.4" stroke="#444" stroke-width=".7"/><path d="M11.4 11.6h1.8v-1.8z" fill="#222"/></svg>
<svg class="a" style="left:4px;top:281.5px" width="13" height="12" viewBox="0 0 13 12"><rect x="1.200" y="1.200" width="9" height="8" fill="#eee" stroke="#222" stroke-width="1"/><path d="M1.200 5c3-1.800 6 1.800 9 0M5.600 1.200c-1.600 2.800 1.600 5.200 0 8" fill="none" stroke="#222" stroke-width=".9"/><circle cx="5.600" cy="5.100" r="1.100" fill="#111"/></svg>
<div class="a" style="left:5.5px;top:296px;width:9.5px;height:8px;background:linear-gradient(90deg,#f6f6f6,#111);border:1px solid #333"></div><svg class="a" style="left:4px;top:307px" width="13" height="12" viewBox="0 0 13 12"><path d="M9.400 1.200c1 1 .4 2-.4 2.800L7.600 2.600C8.400 1.800 8.800.8 9.400 1.200z" fill="#111"/><path d="M8.300 3.300L3.200 8.400l-1.600.8.800-1.600L7.500 2.500" fill="#eaeaea" stroke="#111" stroke-width="1"/><path d="M6.400 2.200l2.600 2.600" stroke="#111" stroke-width="1.300"/><path d="M11.4 11.6h1.8v-1.8z" fill="#222"/></svg>
<svg class="a" style="left:4px;top:320.5px" width="13" height="12" viewBox="0 0 13 12"><rect x="1" y=".8" width="4.400" height="4" fill="#e6e6e6" stroke="#333" stroke-width=".8"/><circle cx="8.200" cy="8" r="2.500" fill="#3a3a3a"/><path d="M4.400 4.200l2.800 2.800" stroke="#777" stroke-width=".8" stroke-dasharray="1 .8"/></svg>
<div class="a" style="left:0;top:333px;width:20px;height:2px;background:#b6b6b6;border-bottom:1px solid #e4e4e4"></div><svg class="a" style="left:4px;top:336px" width="13" height="12" viewBox="0 0 13 12"><rect x="3.400" y="3.800" width="6" height="6.600" rx="1" fill="#ebebeb" stroke="#222" stroke-width="1"/><rect x="5" y="1.600" width="3" height="2.200" fill="#333"/><path d="M1 .8h1.200M2.600 2h1M.8 3h1.200M4.800 6.400h3.400M4.800 8.200h3.400" stroke="#444" stroke-width=".7"/><path d="M11.4 11.6h1.8v-1.8z" fill="#222"/></svg>
<svg class="a" style="left:4px;top:350.5px" width="13" height="12" viewBox="0 0 13 12"><path d="M1 .8v9.400h10" fill="none" stroke="#222" stroke-width=".900"/><rect x="2.200" y="4.400" width="2.200" height="5.400" fill="#222"/><rect x="5.200" y="6.200" width="2.200" height="3.600" fill="#555"/><rect x="8.200" y="2.400" width="2.200" height="7.400" fill="#222"/><path d="M11.4 11.6h1.8v-1.8z" fill="#222"/></svg>
<svg class="a" style="left:4px;top:365px" width="13" height="12" viewBox="0 0 13 12"><rect x="2.600" y="2.400" width="6.800" height="6.800" fill="#ececec" stroke="#222" stroke-width="1"/><path d="M2.600.6v10.400M9.400.6v10.400M.8 2.400h10.400M.8 9.200h10.400" stroke="#333" stroke-width=".6"/></svg>
<svg class="a" style="left:4px;top:379px" width="13" height="12" viewBox="0 0 13 12"><path d="M10.400 1L3.600 7.200l-2.400 2.600 3.400-1.400L11 2z" fill="#222"/><path d="M1.200 6l8 .4" stroke="#333" stroke-width=".8"/><path d="M11.4 11.6h1.8v-1.8z" fill="#222"/></svg>
<svg class="a" style="left:4px;top:392px" width="13" height="12" viewBox="0 0 13 12"><path d="M3.600 10.400C2.600 8.600 1 7.400 1.200 6.400c.6-.8 1.500.2 2 1V2.600c.2-.9 1.200-.9 1.400 0V1.400c.3-.9 1.300-.9 1.500 0v1c.3-.8 1.300-.7 1.400.2v1.200c.3-.7 1.200-.5 1.300.3C9 6.400 9 8.600 8.200 10.400z" fill="#f4f4f4" stroke="#222" stroke-width=".900"/><path d="M11.4 11.6h1.8v-1.8z" fill="#222"/></svg>
<svg class="a" style="left:4px;top:405.5px" width="13" height="12" viewBox="0 0 13 12"><circle cx="4.600" cy="4.400" r="3.200" fill="#e6e6e6" stroke="#222" stroke-width="1.300"/><path d="M6.800 6.800l3.600 3.800" stroke="#111" stroke-width="1.900"/></svg>
<svg class="a" style="left:3px;top:419px" width="16" height="8" viewBox="0 0 16 8"><rect x="2.800" y="2.800" width="4" height="4" fill="#111"/><rect x=".800" y=".8" width="3.800" height="3.800" fill="#fff" stroke="#333" stroke-width=".7"/><path d="M10.400 2.400c2-1.400 3.600-.4 3.800 2" fill="none" stroke="#222" stroke-width=".9"/><path d="M9.400 2.400l1.800-1.600.3 2.200zM12.900 4.300l2.400.1-1.300 1.800z" fill="#222"/></svg><div class="a" style="left:2px;top:430.500px;width:11px;height:10.500px;background:#cc7d42;border:1px solid #3a3024;box-shadow:0 0 0 .6px #efe6dc inset"></div><svg class="a" style="left:7px;top:435.500px" width="12" height="11" viewBox="0 0 12 11"><rect x=".7" y=".7" width="10.600" height="9.600" fill="#fff" stroke="#51243f" stroke-width="1.400"/><rect x="3.400" y="3.300" width="5.200" height="4.400" fill="#d5d5d5" stroke="#51243f" stroke-width=".900"/><path d="M1 10L11 1" stroke="#d0202a" stroke-width="1.300"/></svg><div class="a" style="left:2px;top:430.500px;width:8px;height:7.5px;background:#cc7d42;border:1px solid #3a3024;border-right:0;border-bottom:0"></div><div class="a" style="left:0;top:450px;width:11.500px;height:6px;background:linear-gradient(90deg,#d89a63,#cc7d42 60%,#d99a68)"></div><svg class="a" style="left:12.500px;top:449.500px" width="7" height="7" viewBox="0 0 7 7"><rect x=".4" y=".4" width="6.200" height="6.200" fill="#f7f7f7" stroke="#aaa" stroke-width=".6"/><path d="M.8 6.200L6.200.8" stroke="#d0202a" stroke-width="1.200"/></svg><svg class="a" style="left:6px;top:460px" width="11" height="9" viewBox="0 0 11 9"><rect x="1" y="2" width="7" height="6" fill="#f8f8f8" stroke="#555" stroke-width=".8"/><circle cx="6.800" cy="4" r="3" fill="#c9c9c9" stroke="#333" stroke-width=".9"/></svg><svg class="a" style="left:5px;top:474.500px" width="12" height="8" viewBox="0 0 12 8"><rect x=".6" y="2" width="8" height="5.400" fill="#a9a9a9"/><rect x="2.800" y=".6" width="8.400" height="5.600" fill="#fafafa" stroke="#8c8c8c" stroke-width=".7"/></svg><div class="a" style="left:16px;top:482px;border:1px solid transparent;border-bottom:1.600px solid #333;border-right:1.600px solid #333;border-top:0;border-left:0;width:0;height:0"></div><div class="a" style="left:976px;top:17px;width:22px;height:7.5px;background:linear-gradient(#3c3c3c,#4c4c4c)"></div><svg class="a" style="left:990px;top:18.500px" width="6" height="5" viewBox="0 0 6 5"><path d="M2.600.4v4L.4 2.400zM5.600.4v4L3.400 2.400z" fill="#e4e4e4"/></svg><div class="a" style="left:980px;top:26.500px;width:14px;height:3px;border-top:1px dotted #9c9c9c;border-bottom:1px dotted #9c9c9c"></div><div class="a" style="left:977.500px;top:32px;width:18.500px;height:17px;background:linear-gradient(#8e8e8e,#a6a6a6);border:1px solid #6c6c6c;border-radius:2px"></div><svg class="a" style="left:980px;top:34px" width="14" height="12" viewBox="0 0 14 12"><circle cx="9.200" cy="4" r="2.900" fill="#1e1e1e"/><circle cx="4.400" cy="7.600" r="3" fill="#1e1e1e"/><circle cx="8.400" cy="8.400" r="2.800" fill="#2c2c2c"/><circle cx="8.400" cy="3.200" r="1.200" fill="#f4f4f4"/><circle cx="3.800" cy="6.800" r="1.300" fill="#f4f4f4"/><circle cx="7.400" cy="8" r="1.300" fill="#e0e0e0"/></svg>
<svg class="a" style="left:980px;top:53.5px" width="14" height="12" viewBox="0 0 14 12"><defs><linearGradient id="cg" x1="0" y1="0" x2="1" y2="1"><stop offset="0" stop-color="#f2f2f2"/><stop offset=".6" stop-color="#8a8a8a"/><stop offset="1" stop-color="#111"/></linearGradient></defs><path d="M1.600 1C7.600 1 12.400 5.400 12.400 11.400H1.600z" fill="url(#cg)" stroke="#222" stroke-width="1"/></svg>
<div class="a" style="left:976px;top:70.5px;width:22px;height:2px;background:#6e6e6e;border-bottom:1px solid #ededed"></div><div class="a" style="left:980px;top:74.5px;width:14px;height:3px;border-top:1px dotted #a2a2a2;border-bottom:1px dotted #a2a2a2"></div><svg class="a" style="left:980px;top:82.5px" width="14" height="12" viewBox="0 0 14 12"><rect x="1" y=".8" width="11.600" height="8.800" fill="#1c1c1c"/><rect x="1.8" y="1.5" width="1.900" height="1.900" fill="#ededed"/><rect x="4.5" y="1.5" width="1.900" height="1.900" fill="#8c8c8c"/><rect x="7.2" y="1.5" width="1.900" height="1.900" fill="#cfcfcf"/><rect x="9.9" y="1.5" width="1.900" height="1.900" fill="#5e5e5e"/><rect x="1.8" y="4.2" width="1.900" height="1.900" fill="#8c8c8c"/><rect x="4.5" y="4.2" width="1.900" height="1.900" fill="#cfcfcf"/><rect x="7.2" y="4.2" width="1.900" height="1.900" fill="#5e5e5e"/><rect x="9.9" y="4.2" width="1.900" height="1.900" fill="#ededed"/><rect x="1.8" y="6.9" width="1.900" height="1.900" fill="#cfcfcf"/><rect x="4.5" y="6.9" width="1.900" height="1.900" fill="#5e5e5e"/><rect x="7.2" y="6.9" width="1.900" height="1.900" fill="#ededed"/><rect x="9.9" y="6.9" width="1.900" height="1.900" fill="#8c8c8c"/></svg>
<svg class="a" style="left:980px;top:99.5px" width="14" height="12" viewBox="0 0 14 12"><rect x="3.800" y="6.600" width="6" height="5" fill="#f1f1f1" stroke="#111" stroke-width="1.500"/><path d="M5 6.400L2.400 1.600M6.800 6.400V.6M8.600 6.400l2.400-3.600" stroke="#111" stroke-width="1.300"/><circle cx="11.200" cy="2.800" r="1.500" fill="#111"/><circle cx="2.400" cy="1.800" r="1" fill="#111"/></svg>
<svg class="a" style="left:980px;top:119.5px" width="14" height="12" viewBox="0 0 14 12"><circle cx="7" cy="3" r="2.600" fill="#1c1c1c"/><circle cx="4.200" cy="6.400" r="2.600" fill="#1c1c1c"/><circle cx="9.800" cy="6.400" r="2.600" fill="#1c1c1c"/><path d="M7 5v5.200M4.600 10.400h4.800" stroke="#1c1c1c" stroke-width="1.300"/><circle cx="3.800" cy="6.200" r=".9" fill="#777"/><circle cx="9.400" cy="6.200" r=".9" fill="#777"/></svg>
<div class="a" style="left:976px;top:135.5px;width:22px;height:2px;background:#6e6e6e;border-bottom:1px solid #ededed"></div><div class="a" style="left:980px;top:139.5px;width:14px;height:3px;border-top:1px dotted #a2a2a2;border-bottom:1px dotted #a2a2a2"></div><svg class="a" style="left:980px;top:147.5px" width="14" height="12" viewBox="0 0 14 12"><rect x="1.400" y=".6" width="11" height="1.200" fill="#8c8c8c"/><rect x="1.400" y="3" width="11" height="2.200" fill="#4a4a4a"/><rect x="1.400" y="6.400" width="11" height="2.800" fill="#141414"/></svg>
<div class="a" style="left:981px;top:167px;width:11.500px;height:8.500px;background:linear-gradient(90deg,#f4f4f4,#222);border:1px solid #222"></div><svg class="a" style="left:980px;top:184px" width="14" height="12" viewBox="0 0 14 12"><circle cx="4.800" cy="4.400" r="3.600" fill="#4a4a4a" stroke="#222" stroke-width=".8"/><circle cx="8.200" cy="6.600" r="3.600" fill="#e8e8e8" fill-opacity=".85" stroke="#333" stroke-width=".9"/></svg>
<div class="a" style="left:976px;top:200.5px;width:22px;height:2px;background:#6e6e6e;border-bottom:1px solid #ededed"></div><div class="a" style="left:980px;top:204.5px;width:14px;height:3px;border-top:1px dotted #a2a2a2;border-bottom:1px dotted #a2a2a2"></div><svg class="a" style="left:980px;top:213px" width="14" height="12" viewBox="0 0 14 12"><defs><radialGradient id="ap" cx=".5" cy=".5" r=".5"><stop offset="0" stop-color="#000"/><stop offset=".5" stop-color="#222"/><stop offset=".8" stop-color="#9a9a9a"/><stop offset="1" stop-color="#eee"/></radialGradient></defs><circle cx="7" cy="5.600" r="5" fill="url(#ap)" stroke="#777" stroke-width=".6"/></svg>
<svg class="a" style="left:980px;top:231.5px" width="14" height="12" viewBox="0 0 14 12"><rect x="4" y="1" width="8.600" height="8.400" fill="#fafafa" stroke="#8a8a8a" stroke-width=".9"/><circle cx="4" cy="8" r="2.600" fill="#d6d6d6" stroke="#333" stroke-width="1"/></svg>
<div class="a" style="left:976px;top:246.5px;width:22px;height:2px;background:#6e6e6e;border-bottom:1px solid #ededed"></div><div class="a" style="left:980px;top:250.5px;width:14px;height:3px;border-top:1px dotted #a2a2a2;border-bottom:1px dotted #a2a2a2"></div><svg class="a" style="left:980px;top:258px" width="14" height="12" viewBox="0 0 14 12"><path d="M7 5.200l6 3-6 3-6-3z" fill="#161616"/><path d="M7 .8l6 3-6 3-6-3z" fill="#f7f7f7" stroke="#555" stroke-width=".7"/></svg>
<svg class="a" style="left:980px;top:277px" width="14" height="12" viewBox="0 0 14 12"><path d="M1.400 1h5l2.200 2.200V8H1.400z" fill="#e8e8e8" stroke="#333" stroke-width="1"/><path d="M5 4.600h5l2.200 2.200v4.600H5z" fill="#f6f6f6" stroke="#333" stroke-width="1"/></svg>
<div class="a" style="left:962px;top:106px;width:13px;height:397px;background:#f7f7f7;border-left:1px solid #ececec"></div><div class="a" style="left:965.500px;top:261.500px;width:9.500px;height:8.500px;background:#dedede;border:1px solid #c2c2c2;border-radius:1px"></div><div class="a" style="left:968px;top:495.500px;border:2px solid transparent;border-top:2.400px solid #222;border-bottom:0"></div><div class="a" style="left:840px;top:31px;width:135px;height:75.500px;background:#dadada;border:1px solid #6a6a6a;border-top-color:#3e3e3e;border-right:0"></div><div class="a" style="left:841px;top:32px;width:134px;height:11px;background:linear-gradient(#969696,#808080)"></div><div class="a" style="left:841px;top:32px;width:30px;height:11.500px;background:#dadada;border-right:1px solid #666"></div><svg class="a" style="left:843px;top:37.500px" width="3" height="4" viewBox="0 0 3 4"><path d="M1.500 0l1.300 1.500H.2zM1.500 4l1.300-1.500H.2z" fill="#333"/></svg><div class="t" style="left:848.5px;top:34px"><span class="cj" style="font-size:7.2px;color:#1a1a1a">颜色</span></div><div class="a" style="left:872px;top:32px;width:39px;height:11px;border-right:1px solid #666;background:linear-gradient(#9c9c9c,#888)"></div><div class="t" style="left:875.5px;top:34px"><span class="cj" style="font-size:7.2px;color:#1e1e1e">颜色参考</span></div><svg class="a" style="left:949px;top:35px" width="7" height="5" viewBox="0 0 7 5"><path d="M.4.400v4L2.800 2.400zM3.600.4v4L6 2.400z" fill="#1c1c1c"/></svg><svg class="a" style="left:963px;top:34px" width="10" height="7" viewBox="0 0 10 7"><path d="M0 2.400h3L1.500 4.400z" fill="#222"/><path d="M4 1h5.600M4 3h5.600M4 5h5.600" stroke="#444" stroke-width=".900"/><rect x="-.8" y="-.6" width="11.400" height="7.600" fill="none" stroke="#9a9a9a" stroke-width=".5"/></svg><svg class="a" style="left:850.5px;top:53.5px" width="13" height="13" viewBox="0 0 13 13"><rect x=".7" y=".7" width="11.600" height="11.600" fill="#fff" stroke="#3a2030" stroke-width="1.300"/><rect x="3.600" y="3.600" width="5.800" height="5.800" fill="#dadada" stroke="#3a2030" stroke-width=".900"/><path d="M1 12L12 1" stroke="#d0202a" stroke-width="1.300"/></svg><div class="a" style="left:845px;top:47.500px;width:12px;height:12px;background:#d67c3b;border:1px solid #3a2a1c"></div><svg class="a" style="left:845px;top:68.500px" width="8" height="8" viewBox="0 0 8 8"><circle cx="4" cy="4" r="3.600" fill="#c8c8c8" stroke="#333" stroke-width=".900"/><path d="M4 1.600l2.200 1.200v2.600L4 6.600 1.800 5.400V2.800z" fill="#f2f2f2" stroke="#222" stroke-width=".7"/><path d="M1.800 2.800L4 4l2.200-1.200M4 4v2.600" stroke="#222" stroke-width=".6" fill="none"/></svg><div class="a" style="left:855px;top:68.500px;width:8px;height:7.500px;background:#d67c3b;border:.6px solid #a4683c"></div><div class="t" style="left:868px;top:46.6px;font-size:6.4px;line-height:7px;color:#222;font-weight:bold">C</div><div class="a" style="left:875px;top:47.8px;width:64.5px;height:4.400px;background:linear-gradient(90deg,#e8873c,#c07a48 40%,#5a6650 75%,#12493d);border:1px solid #3a2c22;border-top-width:1.200px"></div><svg class="a" style="left:889.1px;top:52.4px" width="5" height="4" viewBox="0 0 5 4"><path d="M2.500.3L4.700 3.600H.3z" fill="#f2f2f2" stroke="#a8a8a8" stroke-width=".5"/></svg><div class="a" style="left:943px;top:45px;width:20.500px;height:10px;background:#fff;border-top:1px solid #cfcfcf"></div><div class="v" style="left:945.2px;top:46.8px;font-size:6.200px;line-height:7px">25</div><div class="v" style="left:965.400px;top:46.8px;font-size:6.200px;line-height:7px">%</div>
<div class="t" style="left:868px;top:58px;font-size:6.4px;line-height:7px;color:#222;font-weight:bold">M</div><div class="a" style="left:875px;top:59.2px;width:64.5px;height:4.400px;background:linear-gradient(90deg,#c8cc4c,#c89a44 45%,#b8603c 75%,#8a2a30);border:1px solid #3a2c22;border-top-width:1.200px"></div><svg class="a" style="left:913.3px;top:63.8px" width="5" height="4" viewBox="0 0 5 4"><path d="M2.500.3L4.700 3.600H.3z" fill="#f2f2f2" stroke="#a8a8a8" stroke-width=".5"/></svg><div class="a" style="left:943px;top:56.4px;width:20.500px;height:10px;background:#fff;border-top:1px solid #cfcfcf"></div><div class="v" style="left:945.2px;top:58.2px;font-size:6.200px;line-height:7px">63.67</div><div class="v" style="left:965.400px;top:58.2px;font-size:6.200px;line-height:7px">%</div>
<div class="t" style="left:868px;top:69.3px;font-size:6.4px;line-height:7px;color:#222;font-weight:bold">Y</div><div class="a" style="left:875px;top:70.5px;width:64.5px;height:4.400px;background:linear-gradient(90deg,#a8708c,#b0707a 45%,#b87850 80%,#c08232);border:1px solid #3a2c22;border-top-width:1.200px"></div><svg class="a" style="left:924.5px;top:75.1px" width="5" height="4" viewBox="0 0 5 4"><path d="M2.500.3L4.700 3.600H.3z" fill="#f2f2f2" stroke="#a8a8a8" stroke-width=".5"/></svg><div class="a" style="left:943px;top:67.7px;width:20.500px;height:10px;background:#fff;border-top:1px solid #cfcfcf"></div><div class="v" style="left:945.2px;top:69.5px;font-size:6.200px;line-height:7px">81.64</div><div class="v" style="left:965.400px;top:69.5px;font-size:6.200px;line-height:7px">%</div>
<div class="t" style="left:868px;top:80.6px;font-size:6.4px;line-height:7px;color:#222;font-weight:bold">K</div><div class="a" style="left:875px;top:81.8px;width:64.5px;height:4.400px;background:linear-gradient(90deg,#d67c3b,#8a4e26 45%,#321c0e 80%,#000);border:1px solid #3a2c22;border-top-width:1.200px"></div><svg class="a" style="left:873.5px;top:86.4px" width="5" height="4" viewBox="0 0 5 4"><path d="M2.500.3L4.700 3.600H.3z" fill="#f2f2f2" stroke="#a8a8a8" stroke-width=".5"/></svg><div class="a" style="left:943px;top:79px;width:20.500px;height:10px;background:#fff;border-top:1px solid #cfcfcf"></div><div class="v" style="left:945.2px;top:80.8px;font-size:6.200px;line-height:7px">0</div><div class="v" style="left:965.400px;top:80.8px;font-size:6.200px;line-height:7px">%</div>
<div class="a" style="left:843px;top:90.500px;width:126.500px;height:11px;background:#222"></div><div class="a" style="left:854px;top:91px;width:105.500px;height:10px;background:linear-gradient(#fff0,#fff0 38%,#000 100%),linear-gradient(rgba(255,255,255,.75),rgba(255,255,255,0) 38%),linear-gradient(90deg,#e02020,#e8a020 12%,#e8e020 22%,#50c030 36%,#20c0a0 48%,#20b0e0 56%,#2050d0 68%,#7030c0 78%,#d030a0 88%,#e02060 96%,#e02030)"></div><svg class="a" style="left:843.500px;top:91px" width="11" height="10" viewBox="0 0 11 10"><rect width="11" height="10" fill="#fff"/><path d="M.6 9.400L10.400.6" stroke="#c41e28" stroke-width="1.200"/></svg><div class="a" style="left:959.500px;top:91px;width:9.500px;height:5px;background:#fff"></div><div class="a" style="left:959.500px;top:96px;width:9.500px;height:5px;background:#000"></div><div class="a" style="left:924px;top:392px;width:68.500px;height:25px;border-radius:4px 12.500px 12.500px 4px;background:linear-gradient(#fdfdfd,#f3f0f1 55%,#e2dfe0);border:1px solid #cfcaca;box-shadow:0 1.5px 2.500px rgba(0,0,0,.35)"></div><div class="a" style="left:912.4px;top:389px;width:30.2px;height:30.2px;border-radius:50%;background:#a9e6c4;box-shadow:0 0 1.500px rgba(40,120,80,.55)"></div><div class="a" style="left:914.200px;top:390.800px;width:26.600px;height:26.600px;border-radius:50%;overflow:hidden;background:linear-gradient(#149a5e,#0c8a50 45%,#0a7f49 74%,#2fc25e 74.500%,#36c866 100%);box-shadow:inset 0 0 2px rgba(0,60,30,.6)"><div class="a" style="left:5.8px;top:2.2px;width:5px;height:1.600px;border-radius:1px;background:#4fc08a"></div><div class="a" style="left:12.8px;top:2.2px;width:5px;height:1.600px;border-radius:1px;background:#4fc08a"></div><div class="a" style="left:5px;top:22px;width:16px;height:1.2px;background:#5fdc8a;opacity:.8"></div></div><div class="a" style="left:917.800px;top:398.700px;width:28px;font-weight:bold;-webkit-text-stroke:.3px #c2fbe0;font-size:9.600px;line-height:11px;color:#c2fbe0;white-space:nowrap;transform:scaleX(.84);transform-origin:0 0;letter-spacing:0">31<span style="margin-left:2.600px">%</span></div><svg class="a" style="left:944.500px;top:396px" width="6" height="17" viewBox="0 0 6 17"><path d="M3 2v4.600M1.500 3.600L3 1.800l1.500 1.800" fill="none" stroke="#d4575a" stroke-width="1"/><path d="M3 10.400v4.600M1.500 13.400L3 15.200l1.500-1.800" fill="none" stroke="#4aa860" stroke-width="1"/></svg><div class="v" style="left:961.800px;top:397px;font-size:6.300px;line-height:7px;color:#222">0K/s</div><div class="v" style="left:961.800px;top:406.300px;font-size:6.300px;line-height:7px;color:#222">0K/s</div><svg class="a" style="left:976px;top:397px" width="15" height="15" viewBox="0 0 15 15"><defs><radialGradient id="bl" cx=".4" cy=".35" r=".7"><stop offset="0" stop-color="#4a9af0"/><stop offset="1" stop-color="#1858c0"/></radialGradient></defs><circle cx="7" cy="7.400" r="6.300" fill="url(#bl)"/><path d="M7 3.800v7.200M3.600 7.400h6.800" stroke="#eaf4ff" stroke-width="1.700" stroke-linecap="round"/><circle cx="10.600" cy="3.400" r="2.300" fill="#e03a3a" stroke="#f6d0d0" stroke-width=".5"/></svg><div class="v" style="left:913.200px;top:416.500px;font-size:6px;color:#556">1</div><svg class="a" style="left:936px;top:416.500px" width="6" height="5" viewBox="0 0 6 5"><path d="M.6 2.600c0-2.600 4.800-2.600 4.800 0S.6 5.200.6 2.600z" fill="#333"/><circle cx="3" cy="2.400" r="1" fill="#ccc"/></svg></body>
</html>
